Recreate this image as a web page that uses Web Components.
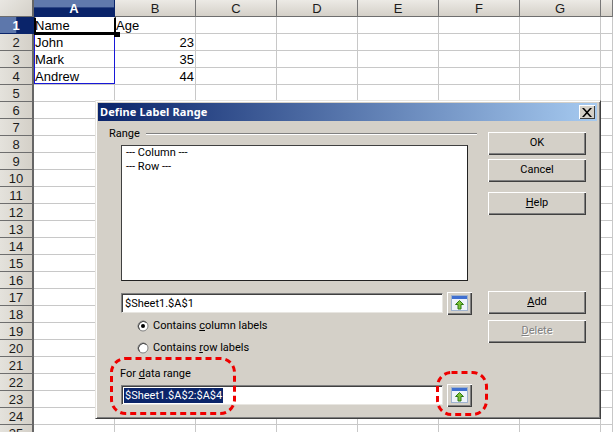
<!DOCTYPE html>
<html><head><meta charset="utf-8">
<style>
html,body{margin:0;padding:0;background:#fff;overflow:hidden}
body{width:613px;height:432px;position:relative}
</style></head>
<body>
<sp-sheet></sp-sheet>
<dlg-window title-text="Define Label Range">
  <dlg-col>
    <dlg-group>Range</dlg-group>
    <dlg-list><div>--- Column ---</div><div>--- Row ---</div></dlg-list>
    <dlg-row style="margin-top:11px"><dlg-field>$Sheet1.$A$1</dlg-field><dlg-shrink></dlg-shrink></dlg-row>
    <dlg-radio checked style="margin-top:3px">Contains <u>c</u>olumn labels</dlg-radio>
    <dlg-radio style="margin-top:4px">Contains <u>r</u>ow labels</dlg-radio>
    <dlg-label style="margin-top:10px">For <u>d</u>ata range</dlg-label>
    <dlg-row style="margin-top:3px"><dlg-field selected>$Sheet1.$A$2:$A$4</dlg-field><dlg-shrink></dlg-shrink></dlg-row>
  </dlg-col>
  <dlg-actions>
    <dlg-button>OK</dlg-button>
    <dlg-button style="margin-top:4px">Cancel</dlg-button>
    <dlg-button style="margin-top:10px"><u>H</u>elp</dlg-button>
    <dlg-button style="margin-top:76px"><u>A</u>dd</dlg-button>
    <dlg-button disabled style="margin-top:6px"><u>D</u>elete</dlg-button>
  </dlg-actions>
</dlg-window>
<red-callout style="left:110px;top:357px;width:126px;height:58px"></red-callout>
<red-callout style="left:436px;top:371px;width:52px;height:45px"></red-callout>
<script>
const def=(name,css,html,extra)=>{
  customElements.define(name,class extends HTMLElement{
    constructor(){super();const r=this.attachShadow({mode:'open'});
      r.innerHTML='<style>'+css+'</style>'+html;}
    connectedCallback(){extra&&extra(this)}
  });
};
const UI='Roboto,"Noto Sans",sans-serif';

class SpSheet extends HTMLElement{
  constructor(){
    super();
    const r=this.attachShadow({mode:'open'});
    const cols=['A','B','C','D','E','F','G',''];
    const data={'1,0':['Name'],'1,1':['Age'],'2,0':['John'],'3,0':['Mark'],'4,0':['Andrew'],'2,1':['23','n'],'3,1':['35','n'],'4,1':['44','n']};
    const at=(y,x)=>`style="grid-row:${y+1};grid-column:${x+1}"`;
    let h=`<div class="hd corner" ${at(0,0)}></div>`;
    cols.forEach((c,i)=>{h+=`<div class="hd col${i==0?' on':''}" ${at(0,i+1)}>${c}</div>`});
    for(let y=1;y<=25;y++){
      h+=`<div class="hd rw${y==1?' on':''}" ${at(y,0)}>${y}</div>`;
      cols.forEach((c,x)=>{
        const d=data[y+','+x];
        h+=`<div class="c${d&&d[1]?' n':''}" ${at(y,x+1)}>${d?d[0]:''}</div>`;
      });
    }
    h+='<div class="range"></div><div class="cursor"></div><div class="handle"></div>';
    r.innerHTML=`<style>
      :host{display:block;width:613px;height:432px;overflow:hidden;font:13px/16px "Liberation Sans",Arial,sans-serif;color:#000}
      .g{display:grid;grid-template-columns:34px repeat(7,81px) 12px;grid-auto-rows:17px;width:613px;height:432px;overflow:hidden}
      .hd{box-sizing:border-box;display:flex;align-items:center;justify-content:center;
          background:linear-gradient(#eceae5,#d4d0c8);border-right:1px solid #808080;border-bottom:1px solid #6e6e6e;color:#1c1c1c;font-size:13px;padding-top:1px}
      .corner{background:linear-gradient(135deg,#e9e7e2,#d4d0c8);border-right:1px solid #777}
      .col{border-right:1px solid #777}
      .rw{border-right:2px solid #666;background:linear-gradient(90deg,#e4e2dc,#d4d0c8)}
      .corner{border-right:2px solid #666}
      .hd.on{background:linear-gradient(#6079ac 0,#6079ac 42%,#0a246a 50%,#0a246a);color:#fff;font-weight:bold;border-color:#0a246a}
      .rw.on{background:linear-gradient(90deg,#5d77ab 0,#5d77ab 50%,#0a246a 52%,#0a246a);border-color:#0a246a}
      .c{box-sizing:border-box;border-right:1px solid #c8c8c8;border-bottom:1px solid #c8c8c8;padding:0 1px;white-space:nowrap;line-height:17px;overflow:hidden}
      .n{text-align:right}
      .range{grid-column:2;grid-row:2/6;border:1px solid #1818d8;border-top:0;box-sizing:border-box;pointer-events:none;margin-bottom:0;height:67px}
      .cursor{grid-column:2;grid-row:2;box-sizing:border-box;border:2px solid #000;border-top:1px solid #fff;border-bottom-width:3px;margin:0 -1px 0 0;pointer-events:none;height:18px}
      .handle{grid-column:2;grid-row:3;width:6px;height:5px;background:#000;justify-self:end;margin:-2px -5px 0 0}
    </style><div class="g">${h}</div>`;
  }
}
customElements.define('sp-sheet',SpSheet);

class DlgWindow extends HTMLElement{
  constructor(){
    super();
    this.attachShadow({mode:'open'}).innerHTML=`<style>
      :host{position:absolute;left:95px;top:100px;width:506px;height:319px;box-sizing:border-box;background:#d4d0c8;
        border:1px solid;border-color:#e8e6e1 #404040 #404040 #e8e6e1;box-shadow:inset 1px 1px 0 #fff,inset -1px -1px 0 #808080;
        padding:2px 3px 2px 2px;display:flex;flex-direction:column;font:11px/14px ${UI};color:#000}
      .t{height:18px;background:linear-gradient(90deg,#0a246a,#a6caf0);display:flex;align-items:center;justify-content:space-between;padding:0 2px 0 2px;flex:none}
      .t b{color:#fff;font:bold 11px/14px "Noto Sans",sans-serif;letter-spacing:.1px}
      .x{width:16px;height:14px;box-sizing:border-box;background:#d4d0c8;box-shadow:inset 1px 1px 0 #fff,inset -1px -1px 0 #404040;display:flex;align-items:center;justify-content:center}
      .b{display:flex;flex:1}
    </style>
    <div class="t"><b></b><div class="x"><svg width="10" height="9" viewBox="0 0 10 9"><path d="M1 0l3 3.2L7 0h2L5 4.5 9 9H7L4 5.8 1 9H-1l4-4.5L-1 0z" fill="#000" transform="translate(1 0)"/></svg></div></div>
    <div class="b"><slot></slot></div>`;
  }
  connectedCallback(){this.shadowRoot.querySelector('b').textContent=this.getAttribute('title-text')}
}
customElements.define('dlg-window',DlgWindow);

def('dlg-col',':host{display:flex;flex-direction:column;width:390px;box-sizing:border-box;padding:6px 11px 0 11px}','<slot></slot>');
def('dlg-actions',':host{display:flex;flex-direction:column;width:98px;padding-top:11px}','<slot></slot>');
def('dlg-group',':host{display:flex;align-items:center;height:14px;gap:6px}.l{flex:1;height:2px;background:linear-gradient(#808080 50%,#fff 50%)}','<slot></slot><div class="l"></div>');
def('dlg-list',`:host{display:block;box-sizing:border-box;width:347px;height:136px;margin:4px 0 0 12px;background:#fff;border:1px solid #404040;border-right-color:#222;border-bottom-color:#222;padding:0 4px;line-height:14px}
  ::slotted(div){height:14px}`,'<slot></slot>');
def('dlg-row',':host{display:flex;align-items:center;gap:4px;margin-left:12px;height:22px}','<slot></slot>');
def('dlg-field',`:host{display:flex;align-items:center;box-sizing:border-box;width:322px;height:20px;background:#fff;
    border:1px solid;border-color:#808080 #e8e6e1 #e8e6e1 #808080;box-shadow:inset 1px 1px 0 #404040;padding:1px 2px;white-space:nowrap}
  :host([selected]) span{background:#0a246a;color:#fff;}
  span{display:inline-block;padding:0 1px;font-size:11px;line-height:15px}`,'<span><slot></slot></span>');
def('dlg-shrink',`:host{display:flex;align-items:center;justify-content:center;box-sizing:border-box;width:25px;height:23px;background:#d4d0c8;
    box-shadow:inset 1px 1px 0 #fff,inset -1px -1px 0 #404040,inset -2px -2px 0 #808080}`,
 `<svg width="17" height="16" viewBox="0 0 17 16">
   <rect x=".5" y=".5" width="16" height="15" fill="#eef3fb" stroke="#9fb3cf"/>
   <rect x="1" y="1" width="15" height="3" fill="#3f6fd0"/>
   <path d="M8.5 5.5L12.5 9.5H10V14H7V9.5H4.5z" fill="#7cc23a" stroke="#2f7a14" stroke-width="1" stroke-linejoin="round"/>
 </svg>`);
def('dlg-radio',`:host{display:flex;align-items:center;gap:4px;height:18px;margin-left:28px}
  `,`<svg width="12" height="12" viewBox="0 0 12 12"><circle cx="6" cy="6" r="5" fill="#fff" stroke="#808080"/><path d="M2.5 9.5A5 5 0 0 1 9.5 2.5" fill="none" stroke="#404040"/><circle class="d" cx="6" cy="6" r="2" fill="#000"/></svg><span><slot></slot></span>`,
  el=>{if(!el.hasAttribute('checked'))el.shadowRoot.querySelector('.d').remove()});
def('dlg-label',':host{display:block;height:14px;margin-left:11px}','<slot></slot>');
def('dlg-button',`:host{display:flex;align-items:center;justify-content:center;box-sizing:border-box;width:98px;height:23px;padding-bottom:2px;background:#d4d0c8;
    box-shadow:inset 1px 1px 0 #fff,inset -1px -1px 0 #404040,inset -2px -2px 0 #808080}
  :host([disabled]){color:#808080;text-shadow:1px 1px 0 #fff}`,'<slot></slot>');
def('red-callout',':host{position:absolute;display:block}svg{display:block;width:100%;height:100%;overflow:visible}',
 '<svg><rect fill="none" stroke="#ee0000" stroke-width="3" stroke-dasharray="6 4" stroke-linecap="butt" rx="14"/></svg>',
 el=>{const w=parseInt(el.style.width),h=parseInt(el.style.height);const r=el.shadowRoot.querySelector('rect');
   r.setAttribute('x',1.5);r.setAttribute('y',1.5);r.setAttribute('width',w-3);r.setAttribute('height',h-3);});
</script>
</body></html>
